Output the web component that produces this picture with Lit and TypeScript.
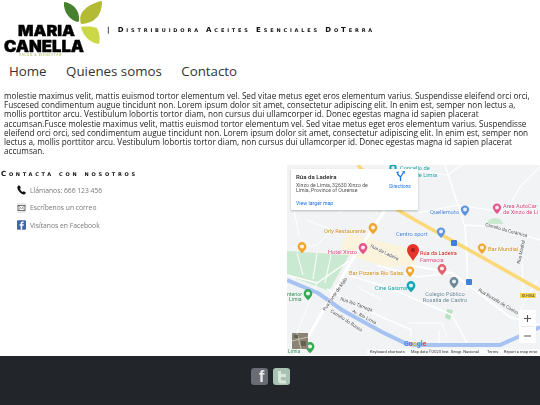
import { LitElement, html, css, svg } from "lit";
import { customElement } from "lit/decorators.js";

const pin = (x: number, y: number, c: string, s = 1) => svg`
  <g transform="translate(${x} ${y}) scale(${s})">
    <path d="M0 5.5C-3.2 2.4-4.6.4-4.6-1.6a4.6 4.6 0 0 1 9.2 0C4.6.4 3.2 2.4 0 5.5Z" fill=${c}/>
    <circle cx="0" cy="-1.6" r="2.2" fill="#fff" opacity=".85"/>
  </g>`;

const label = (x: number, y: number, t: string, c: string, size = 5.7, anchor = "start", w = 400) => svg`
  <text x=${x} y=${y} fill=${c} font-size=${size} text-anchor=${anchor} font-weight=${w} class="halo">${t}</text>`;

const rlabel = (x: number, y: number, a: number, t: string) => svg`
  <text transform="translate(${x} ${y}) rotate(${a})" fill="#444" font-size="4.7" class="halo">${t}</text>`;

const roads: [string, number][] = [
  ["M98 45 65 95 21 172 8 190", 3],
  ["M158 0 178 62 180 95 180 125", 1.5],
  ["M178 60 210 62 253 75", 1.5],
  ["M131 48 170 40 210 46 290 50", 1.2],
  ["M218 48 233 22 253 2", 1.2],
  ["M131 6 160 10 175 0", 1.2],
  ["M123 100 165 108 223 152 253 160", 2],
  ["M0 110 30 118 62 96", 1.5],
  ["M60 110 100 122 165 150 180 178", 1.5],
  ["M40 124 90 150 125 165", 1.5],
  ["M90 100 130 112 165 108", 1.5],
  ["M30 118 5 180", 1],
  ["M70 122 95 135", 1],
  ["M122 158 155 158 160 172M124 165 124 178M152 165 152 178", 1],
  ["M235 95 236 130M230 150 250 115", 1],
  ["M20 55 45 65 30 80 6 83", 1],
  ["M50 48 80 32 90 48", 1],
  ["M6 40 12 70", 1],
  ["M10 88 16 110M30 88 26 114M44 90 38 118", 1],
];

const svgMap = () => svg`
<svg class="msvg" viewBox="0 0 253 190" width="253" height="190" aria-hidden="true">
  <rect width="253" height="190" fill="#f1f3f4"/>
  <path d="M60 68 128 85 128 100 100 102 52 88Z" fill="#fbf3dc"/>
  <path d="M0 86 62 90 42 126 0 110Z" fill="#c9ead0"/>
  <path d="M202 55a8 6 0 0 1 16 0Z" fill="#c9ead0" transform="translate(-2 4)"/>
  <path d="M160 144l6 1-3 10-5-2Z" fill="#b9e3c0"/>
  ${roads.map(([d, w]) => svg`<path d=${d} fill="none" stroke="#fff" stroke-width=${w} stroke-linejoin="round"/>`)}
  <path d="M0 115 31 128 55 145 95 167 118 178 128 180 213 180 253 162" fill="none" stroke="#a6c3f2" stroke-width="4"/>
  <path d="M71 0 111 45 128 55 200 95 253 125" fill="none" stroke="#fbd979" stroke-width="3.6"/>

  ${label(113, 5, "Concello de", "#129a9a")}
  ${label(113, 12, "Xinzo de Limia", "#129a9a")}
  ${pin(106, 4, "#12a5b5", .8)}
  ${label(143, 49, "Quellemoto", "#3f7fd6")}
  ${pin(178, 46, "#5b93e0", .9)}
  ${label(216, 43, "Area AutoCar", "#d9437f")}
  ${label(216, 49, "de Xinzo de Li", "#d9437f")}
  ${pin(210, 44, "#e4558d", .9)}
  ${rlabel(198, 61, 15, "Camiño da Cerámica")}
  ${label(109, 71, "Centro sport", "#3f7fd6")}
  ${pin(154, 68, "#5b93e0", .9)}
  ${label(201, 86, "Bar Mundial", "#d08a12")}
  ${pin(195, 84, "#f0a52b", .9)}
  <rect x="164" y="75" width="6" height="6" rx="1" fill="#3e7fe0"/>
  <rect x="179" y="114" width="6" height="6" rx="1" fill="#3e7fe0"/>
  ${rlabel(233, 99, -78, "Rúa Madrid")}

  <path d="M126 96C122 90 120 88 120 85a6 6 0 0 1 12 0c0 3-2 5-6 11Z" fill="#e5352b"/>
  <circle cx="126" cy="85" r="2" fill="#a81d1d"/>
  ${label(133, 90, "Rúa da Ladeira", "#c5221f", 5.6)}
  ${label(133, 97, "Farmacia", "#d9437f")}
  ${pin(155, 105, "#e4606d", .95)}
  ${label(37, 68, "Orly Restaurante", "#c88a1f")}
  ${pin(86, 64, "#f0a52b", .95)}
  ${pin(15, 83, "#f0a52b", .95)}
  ${label(41, 89, "Hotel Xinzo", "#d9437f")}
  ${pin(76, 84, "#e4558d", .95)}
  ${rlabel(83, 82, 26, "Rúa da Ladeira")}
  ${label(62, 110, "Bar Pizzeria Rio Salas", "#c88a1f")}
  ${pin(123, 107, "#f0a52b", .9)}
  ${label(88, 125, "Cine Gaisma", "#129a9a")}
  ${pin(124, 122, "#12a5b5", .95)}
  ${rlabel(38, 146, -55, "Rua Ponte de Malo")}
  ${rlabel(53, 135, 20, "Rúa Río Támega")}
  ${rlabel(65, 147, 28, "Av. Río Limia")}
  ${rlabel(43, 147, 32, "Camiño do Bouzo")}
  ${label(0, 131, "nterior", "#2e8b57", 5.2)}
  ${label(2, 136, "Limia", "#2e8b57", 5.2)}
  ${pin(21, 130, "#34a853", .95)}
  ${label(1, 188, "Limia", "#2e8b57", 5)}
  ${pin(23, 183, "#34a853", .95)}
  ${label(158, 131, "Colegio Público", "#5f7f8f", 5.7, "middle")}
  ${label(158, 137, "Rosalía de Castro", "#5f7f8f", 5.7, "middle")}
  ${pin(167, 118, "#6b8797", .95)}
  ${rlabel(191, 126, 31, "Rua Rosalía de Castro")}
  <rect x="233" y="128" width="16" height="5" fill="#f6d64f"/>
  <text x="241" y="132" font-size="3.8" text-anchor="middle" fill="#333">OU-304</text>

  <g><rect x="5" y="168" width="16" height="16" fill="#8b8375"/>
    <path d="M5 176 21 172M10 168 14 184" stroke="#c8c3b4" stroke-width="1"/>
    <rect x="7" y="170" width="4" height="3" fill="#5d6450"/><rect x="14" y="176" width="5" height="5" fill="#66604f"/>
  </g>

  <text x="117" y="181" font-size="7" font-weight="700"><tspan fill="#4285f4">G</tspan><tspan fill="#ea4335">o</tspan><tspan fill="#fbbc05">o</tspan><tspan fill="#4285f4">g</tspan><tspan fill="#34a853">l</tspan><tspan fill="#ea4335">e</tspan></text>
  <rect x="80" y="184" width="173" height="6" fill="#fff" opacity=".55"/>
  <g font-size="4" fill="#333">
    <text x="83" y="188">Keyboard shortcuts</text>
    <text x="124" y="188">Map data ©2023 Inst. Geogr. Nacional</text>
    <text x="200" y="188">Terms</text>
    <text x="217" y="188">Report a map error</text>
  </g>

  <rect x="232" y="145" width="17" height="33" fill="#fff"/>
  <path d="M240.500 150v7M237 153.500h7M237 171h7" stroke="#555" stroke-width="1.1" fill="none"/>
  <path d="M234 161.500h13" stroke="#ddd" stroke-width=".6"/>
</svg>`;

@customElement("app-root")
export class AppRoot extends LitElement {
  static styles = css`
    :host { display: block; width: 540px; height: 405px; overflow: hidden; background: #fff; font-family: "Open Sans", sans-serif; }
    .head { display: flex; align-items: center; height: 60px; }
    .logo { flex: none; filter: blur(.3px); }
    .logo text { font-family: Inter, "Liberation Sans", sans-serif; font-weight: 900; stroke: #000; stroke-width: .4px; }
    .tagline {
      margin: 0 0 0 -3px; font-family: "DejaVu Sans", sans-serif; font-weight: 700; font-variant: small-caps;
      font-size: 7px; letter-spacing: 2.84px; color: #111; white-space: nowrap; filter: blur(.25px);
    }
    nav { display: flex; gap: 19.500px; height: 30px; padding: 0 0 0 9px; align-items: center; font-size: 13.300px; color: #333; box-sizing: border-box; margin-top: -4px; }
    .copy { margin: 5px 4px 0 4px; height: 64px; font-size: 8.170px; line-height: 9.170px; color: #222; filter: blur(.2px); }
    .bottom { display: grid; grid-template-columns: 287px 253px; margin-top: 10px; height: 190px; }
    h2 {
      margin: 5px 0 7px 1px; font-family: "DejaVu Sans", sans-serif; font-weight: 700; font-variant: small-caps;
      font-size: 7px; letter-spacing: 2.74px; line-height: 8px; color: #111; white-space: nowrap; filter: blur(.25px);
    }
    .rows { display: flex; flex-direction: column; gap: 7px; padding-left: 17px; }
    .row { display: flex; align-items: center; gap: 4px; height: 10.500px; font-size: 6.750px; color: #777; filter: blur(.2px); }
    .row svg { flex: none; }
    .map { position: relative; overflow: hidden; width: 253px; height: 190px; font-family: Roboto, sans-serif; }
    .msvg { display: block; filter: blur(.3px); font-family: Roboto, sans-serif; }
    .msvg .halo { paint-order: stroke; stroke: #fff; stroke-width: .7px; }
    .card {
      position: absolute; left: 4px; top: 4px; width: 127px; height: 41px; background: #fff; box-shadow: 0 1px 2px rgba(0,0,0,.25);
      box-sizing: border-box; padding: 4px 5px; display: grid; grid-template-columns: 1fr 26px; filter: blur(.2px);
    }
    .title { font-size: 6.100px; font-weight: 500; color: #222; line-height: 7px; }
    .addr { font-size: 5.200px; color: #555; line-height: 5.700px; margin-top: 2.500px; }
    .larger { font-size: 5.200px; color: #1a73e8; margin-top: 6px; line-height: 7px; }
    .dir { display: flex; flex-direction: column; align-items: center; font-size: 4.800px; color: #1a73e8; gap: 3px; margin-top: -2px; }
    footer { height: 50px; margin-top: 1px; background: #22262b; display: flex; justify-content: center; gap: 5px; padding: 12px 0 0 1px; box-sizing: border-box; }
    .soc { width: 17px; height: 17px; border-radius: 3px; display: flex; align-items: center; justify-content: center; filter: blur(.3px); }
    .fb { background: #6a6c74; color: #e8e8e8; font: 700 17px/17px "Liberation Sans", sans-serif; padding-left: 4px; box-sizing: border-box; }
    .tw { background: #a9c2b4; }
  `;

  render() {
    return html`
      <div class="head">
        <svg class="logo" width="110" height="60" viewBox="0 0 110 60" aria-hidden="true">
          <path d="M64 2C72 3 80 9 79 21L77.500 22C70 20 63 12 64 2Z" fill="#47812f"/>
          <path d="M102 1C102 13 97 23 81 24C77 12 88 4 102 1Z" fill="#b2bb33"/>
          <path d="M81 27C88 26 95 27 97 28C100 34 100 40 99 44C90 43 83 36 81 27Z" fill="#cbd846"/>
          <text x="18" y="36" font-size="15" textLength="57" lengthAdjust="spacingAndGlyphs">MARIA</text>
          <text x="4" y="51.500" font-size="15.500" textLength="80" lengthAdjust="spacingAndGlyphs">CANELLA</text>
          <text x="19" y="55.500" font-size="3" fill="#9db23a" style="stroke:none;font-weight:400;letter-spacing:.75px">SALUD &amp; BIENESTAR</text>
        </svg>
        <div class="tagline">| Distribuidora Aceites Esenciales DoTerra</div>
      </div>
      <nav><span>Home</span><span>Quienes somos</span><span>Contacto</span></nav>
      <p class="copy">molestie maximus velit, mattis euismod tortor elementum vel. Sed vitae metus eget eros elementum varius. Suspendisse eleifend orci orci, Fuscesed condimentum augue tincidunt non. Lorem ipsum dolor sit amet, consectetur adipiscing elit. In enim est, semper non lectus a, mollis porttitor arcu. Vestibulum lobortis tortor diam, non cursus dui ullamcorper id. Donec egestas magna id sapien placerat accumsan.Fusce molestie maximus velit, mattis euismod tortor elementum vel. Sed vitae metus eget eros elementum varius. Suspendisse eleifend orci orci, sed condimentum augue tincidunt non. Lorem ipsum dolor sit amet, consectetur adipiscing elit. In enim est, semper non lectus a, mollis porttitor arcu. Vestibulum lobortis tortor diam, non cursus dui ullamcorper id. Donec egestas magna id sapien placerat accumsan.</p>
      <div class="bottom">
        <section>
          <h2>Contacta con nosotros</h2>
          <div class="rows">
            <div class="row">
              <svg width="9" height="10" viewBox="0 0 9 10" aria-hidden="true"><path d="M1.500.5 3 .8 3.800 3 2.900 4C3.500 5.300 4.300 6.200 5.500 7L6.600 6.200 8.700 7.300 8.600 8.500C8 9.500 6.500 9.800 5 9 2.500 7.700.8 5.300.4 3 .2 1.800.7 1 1.500.5Z" fill="#111"/></svg>
              <span>Llámanos: 666 123 456</span>
            </div>
            <div class="row">
              <svg width="9" height="10" viewBox="0 0 9 10" aria-hidden="true"><rect width="9" height="10" rx="1" fill="#e9e9e9"/><rect x="1" y="2.500" width="7" height="5" fill="#fff" stroke="#555" stroke-width=".8"/><path d="M1 2.500 4.500 5.500 8 2.500M1 7.500 3.500 4.800M8 7.500 5.500 4.800" fill="none" stroke="#555" stroke-width=".6"/></svg>
              <span>Escríbenos un correo</span>
            </div>
            <div class="row">
              <svg width="9" height="10" viewBox="0 0 9 10" aria-hidden="true"><rect width="9" height="9.500" y=".3" rx="1" fill="#3f67a8"/><path d="M5.200 9.800V5.800H6.600L6.800 4.300H5.200V3.400C5.200 2.900 5.400 2.700 5.900 2.700H6.800V1.400H5.600C4.300 1.400 3.700 2.100 3.700 3.200V4.300H2.600V5.800H3.700V9.800Z" fill="#fff"/></svg>
              <span>Visítanos en Facebook</span>
            </div>
          </div>
        </section>
        <div class="map">
          ${svgMap()}
          <div class="card">
            <div>
              <div class="title">Rúa da Ladeira</div>
              <div class="addr">Xinzo de Limia, 32630 Xinzo de<br>Limia, Province of Ourense</div>
              <div class="larger">View larger map</div>
            </div>
            <div class="dir">
              <svg width="9" height="10" viewBox="0 0 9 10" aria-hidden="true"><path d="M4.500 10V6L1.500 3M4.500 6 7.500 1.500" fill="none" stroke="#1a73e8" stroke-width="1.300"/><path d="M0 1 3 .5 2 3.500ZM6 .5 9 0 8.500 3Z" fill="#1a73e8"/></svg>
              <span>Directions</span>
            </div>
          </div>
        </div>
      </div>
      <footer>
        <div class="soc fb">f</div>
        <div class="soc tw">
          <svg width="17" height="17" viewBox="0 0 17 17" aria-hidden="true"><path d="M5 3h3v3h5v3H8v2c0 1 .5 1.500 1.500 1.500H13v3H8c-2 0-3-1-3-3Z" fill="#d8e6db"/></svg>
        </div>
      </footer>
    `;
  }
}
